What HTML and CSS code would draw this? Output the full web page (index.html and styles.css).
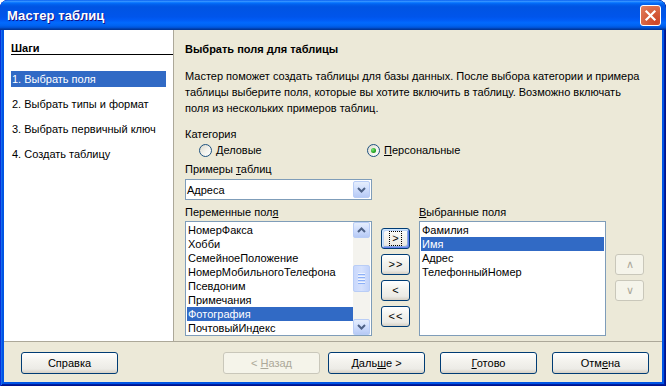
FILE: index.html
```html
<!DOCTYPE html>
<html lang="ru">
<head>
<meta charset="utf-8">
<title>Мастер таблиц</title>
<link rel="stylesheet" href="styles.css">
</head>
<body>
<div class="window">
  <div class="titlebar">
    <span class="title">Мастер таблиц</span>
    <span class="close">
      <svg width="19" height="19" viewBox="0 0 19 19"><path d="M5.5 5.5 L13.5 13.5 M13.5 5.5 L5.5 13.5" stroke="#fff" stroke-width="2.2" stroke-linecap="square"/></svg>
    </span>
  </div>
  <div class="client">
    <div class="main">
      <div class="sidebar">
        <div class="steps-head">Шаги</div>
        <ul class="steps">
          <li class="sel">1. Выбрать поля</li>
          <li>2. Выбрать типы и формат</li>
          <li>3. Выбрать первичный ключ</li>
          <li>4. Создать таблицу</li>
        </ul>
      </div>
      <div class="content">
        <div class="heading">Выбрать поля для таблицы</div>
        <p class="desc">Мастер поможет создать таблицы для базы данных. После выбора категории и примера<br>таблицы выберите поля, которые вы хотите включить в таблицу. Возможно включать<br>поля из нескольких примеров таблиц.</p>
        <div class="lbl cat">Категория</div>
        <div class="radios">
          <label class="radio first"><span class="circle"></span><span><u>Д</u>еловые</span></label>
          <label class="radio"><span class="circle on"><span class="dot"></span></span><span><u>П</u>ерсональные</span></label>
        </div>
        <div class="lbl samples">Примеры <u>т</u>аблиц</div>
        <div class="combo">
          <span class="combo-text">Адреса</span>
          <span class="dd"><svg width="9" height="6" viewBox="0 0 9 6"><path d="M1 1 L4.5 4.5 L8 1" fill="none" stroke="#4D6185" stroke-width="2"/></svg></span>
        </div>
        <div class="fields">
          <div class="col">
            <div class="lbl">Переменные пол<u>я</u></div>
            <div class="list">
              <ul class="items">
                <li>НомерФакса</li>
                <li>Хобби</li>
                <li>СемейноеПоложение</li>
                <li>НомерМобильногоТелефона</li>
                <li>Псевдоним</li>
                <li>Примечания</li>
                <li class="sel">Фотография</li>
                <li>ПочтовыйИндекс</li>
              </ul>
              <div class="scrollbar">
                <span class="sbtn"><svg width="9" height="6" viewBox="0 0 9 6"><path d="M1 5 L4.5 1.5 L8 5" fill="none" stroke="#4D6185" stroke-width="2"/></svg></span>
                <div class="track"><span class="thumb"><i></i><i></i><i></i><i></i></span></div>
                <span class="sbtn"><svg width="9" height="6" viewBox="0 0 9 6"><path d="M1 1 L4.5 4.5 L8 1" fill="none" stroke="#4D6185" stroke-width="2"/></svg></span>
              </div>
            </div>
          </div>
          <div class="movebtns">
            <button class="btn small default"><span class="focus">&gt;</span></button>
            <button class="btn small"><span class="dbl">&gt;&gt;</span></button>
            <button class="btn small"><span>&lt;</span></button>
            <button class="btn small"><span class="dbl">&lt;&lt;</span></button>
          </div>
          <div class="col">
            <div class="lbl"><u>В</u>ыбранные поля</div>
            <div class="list">
              <ul class="items wide">
                <li>Фамилия</li>
                <li class="sel">Имя</li>
                <li>Адрес</li>
                <li>ТелефонныйНомер</li>
              </ul>
            </div>
          </div>
          <div class="orderbtns">
            <button class="btn small disabled"><span>&#8743;</span></button>
            <button class="btn small disabled"><span>&#8744;</span></button>
          </div>
        </div>
      </div>
    </div>
    <div class="footer">
      <button class="btn big help"><span>Справка</span></button>
      <button class="btn big disabled back"><span>&lt; <u>Н</u>азад</span></button>
      <button class="btn big next"><span>Даль<u>ш</u>е &gt;</span></button>
      <button class="btn big done"><span><u>Г</u>отово</span></button>
      <button class="btn big cancel"><span>Отм<u>е</u>на</span></button>
    </div>
  </div>
</div>
</body>
</html>
```
FILE: styles.css
```css
html, body {
  margin: 0;
  padding: 0;
  background: #ffffff;
}

body {
  font-family: "Liberation Sans", Arial, sans-serif;
  font-size: 11px;
  color: #000;
}

.window {
  width: 666px;
  height: 386px;
  display: flex;
  flex-direction: column;
  background: #0055E5;
  border-radius: 8px 8px 0 0;
  overflow: hidden;
  box-shadow: inset 1px 0 #0831D9, inset -1px 0 #00138C, inset 0 -1px #00138C,
    inset 2px 0 #166AEE, inset -2px 0 #001EA0, inset 0 -2px #001EA0;
}

.titlebar {
  height: 30px;
  flex: none;
  display: flex;
  align-items: center;
  padding: 0 5px 0 7px;
  border-radius: 8px 8px 0 0;
  background: linear-gradient(180deg, #0058EE 0%, #3A93FF 4%, #288EFF 6%, #127DFF 8%, #036FFC 10%, #0262EE 14%, #0057E5 20%, #0054E3 24%, #0055EB 56%, #005BF5 66%, #026AFE 76%, #0062EF 86%, #0052D6 92%, #0040AB 96%, #003092 100%);
}

.title {
  flex: 1;
  color: #fff;
  font-weight: bold;
  font-size: 13px;
  letter-spacing: 0.1px;
  text-shadow: 1px 1px #0F1089;
}

.close {
  width: 19px;
  height: 19px;
  border: 1px solid #fff;
  border-radius: 3px;
  background: radial-gradient(circle at 80% 85%, #CC4628 0%, #D45A38 40%, #E3815F 100%);
  display: flex;
  align-items: center;
  justify-content: center;
  margin-top: 1px;
}

.client {
  flex: 1;
  margin: 0 4px 4px;
  background: #ECE9D8;
  display: flex;
  flex-direction: column;
}

.main {
  height: 311px;
  display: flex;
}

.sidebar {
  width: 169px;
  background: #fff;
  border-right: 1px solid #ACA899;
}

.steps-head {
  margin-left: 7px;
  padding-top: 12px;
  line-height: 12px;
  height: 12px;
  font-weight: bold;
  border-bottom: 1px solid #000;
}

.steps {
  list-style: none;
  margin: 16px 0 0;
  padding: 0;
}

.steps li {
  height: 16px;
  line-height: 16px;
  margin: 0 7px 9px;
  padding-left: 1px;
  white-space: nowrap;
}

.steps li.sel {
  background: #316AC5;
  color: #fff;
}

.content {
  flex: 1;
  padding: 12px 0 0 11px;
}

.heading {
  font-weight: bold;
  line-height: 14px;
  height: 14px;
}

.desc {
  margin: 12px 0 0;
  line-height: 16px;
  white-space: nowrap;
}

.lbl {
  line-height: 14px;
  height: 14px;
  white-space: nowrap;
}

.cat {
  margin-top: 11px;
}

.radios {
  margin-top: 2px;
  height: 14px;
  display: flex;
  padding-left: 14px;
}

.radio {
  display: flex;
  align-items: center;
  line-height: 14px;
}

.radio.first {
  width: 168px;
}

.circle {
  width: 11px;
  height: 11px;
  border: 1px solid #1C5180;
  border-radius: 50%;
  background: linear-gradient(135deg, #DCD9CB 0%, #F4F3EE 55%, #ffffff 100%);
  margin-right: 4px;
  display: flex;
  align-items: center;
  justify-content: center;
}

.dot {
  width: 5px;
  height: 5px;
  border-radius: 50%;
  background: radial-gradient(circle at 35% 35%, #7CE87A 0%, #21A121 60%, #0E870E 100%);
}

.samples {
  margin-top: 5px;
}

.combo {
  margin-top: 3px;
  width: 185px;
  height: 19px;
  border: 1px solid #7F9DB9;
  background: #fff;
  display: flex;
  align-items: center;
}

.combo-text {
  flex: 1;
  padding-left: 1px;
  line-height: 14px;
}

.dd, .sbtn {
  width: 15px;
  height: 15px;
  border: 1px solid #B9CDF6;
  border-radius: 2px;
  background: linear-gradient(180deg, #E6EEFC 0%, #D1DFFD 45%, #B7CAF5 100%);
  display: flex;
  align-items: center;
  justify-content: center;
}

.dd {
  margin-right: 1px;
}

.fields {
  display: flex;
  margin-top: 5px;
}

.col .lbl {
  margin-bottom: 2px;
}

.list {
  width: 185px;
  height: 113px;
  border: 1px solid #7F9DB9;
  background: #fff;
  display: flex;
  overflow: hidden;
}

.items {
  list-style: none;
  margin: 0;
  padding: 1px 0 0 1px;
  flex: 1;
  min-width: 0;
}

.items.wide {
  padding-right: 1px;
}

.items li {
  height: 14px;
  line-height: 14px;
  padding-left: 1px;
  white-space: nowrap;
}

.items li.sel {
  background: #316AC5;
  color: #fff;
}

.scrollbar {
  width: 17px;
  margin-right: 1px;
  display: flex;
  flex-direction: column;
  background: #F4F3EE;
}

.sbtn {
  width: 15px;
  height: 14px;
  flex: none;
}

.track {
  flex: 1;
  padding-top: 27px;
}

.thumb {
  width: 15px;
  height: 25px;
  border: 1px solid #B9CDF6;
  border-radius: 2px;
  background: linear-gradient(90deg, #C9D8FC 0%, #D5E1FD 50%, #C2D3FB 100%);
  display: flex;
  flex-direction: column;
  align-items: center;
  justify-content: center;
  gap: 1px;
}

.thumb i {
  display: block;
  width: 7px;
  height: 1px;
  background: #EEF4FE;
  border-bottom: 1px solid #8CB0F8;
}

.movebtns, .orderbtns {
  display: flex;
  flex-direction: column;
  gap: 5px;
  margin: 0 9px;
}

.movebtns {
  padding-top: 23px;
}

.orderbtns {
  padding-top: 49px;
}

.btn {
  font-family: "Liberation Sans", Arial, sans-serif;
  font-size: 11px;
  color: #000;
  border: 1px solid #003C74;
  border-radius: 3px;
  background: linear-gradient(180deg, #FFFFFF 0%, #F4F3EE 40%, #ECEBE6 80%, #D6D0C5 100%);
  padding: 0;
  margin: 0;
  display: flex;
  align-items: center;
  justify-content: center;
  line-height: 13px;
  white-space: pre;
}

.btn.small {
  width: 29px;
  height: 21px;
}

.dbl {
  letter-spacing: 1px;
  padding-left: 1px;
}

.btn.default {
  box-shadow: inset 1px 1px #CEE7FF, inset -1px -1px #6982EE, inset 2px 2px #BCD4F6, inset -2px -2px #89ADE4;
}

.focus {
  border: 1px dotted #000;
  padding: 0 2px;
  line-height: 13px;
}

.btn.disabled {
  color: #ACA899;
  border-color: #C9C7BA;
  background: #F5F4EA;
}

.footer {
  flex: 1;
  border-top: 1px solid #ACA899;
  display: flex;
  align-items: flex-start;
  padding-top: 10px;
}

.btn.big {
  width: 97px;
  height: 22px;
}

.help {
  margin-left: 17px;
}

.back {
  margin-left: 105px;
}

.next {
  margin-left: 8px;
}

.done, .cancel {
  margin-left: 15px;
}
```
